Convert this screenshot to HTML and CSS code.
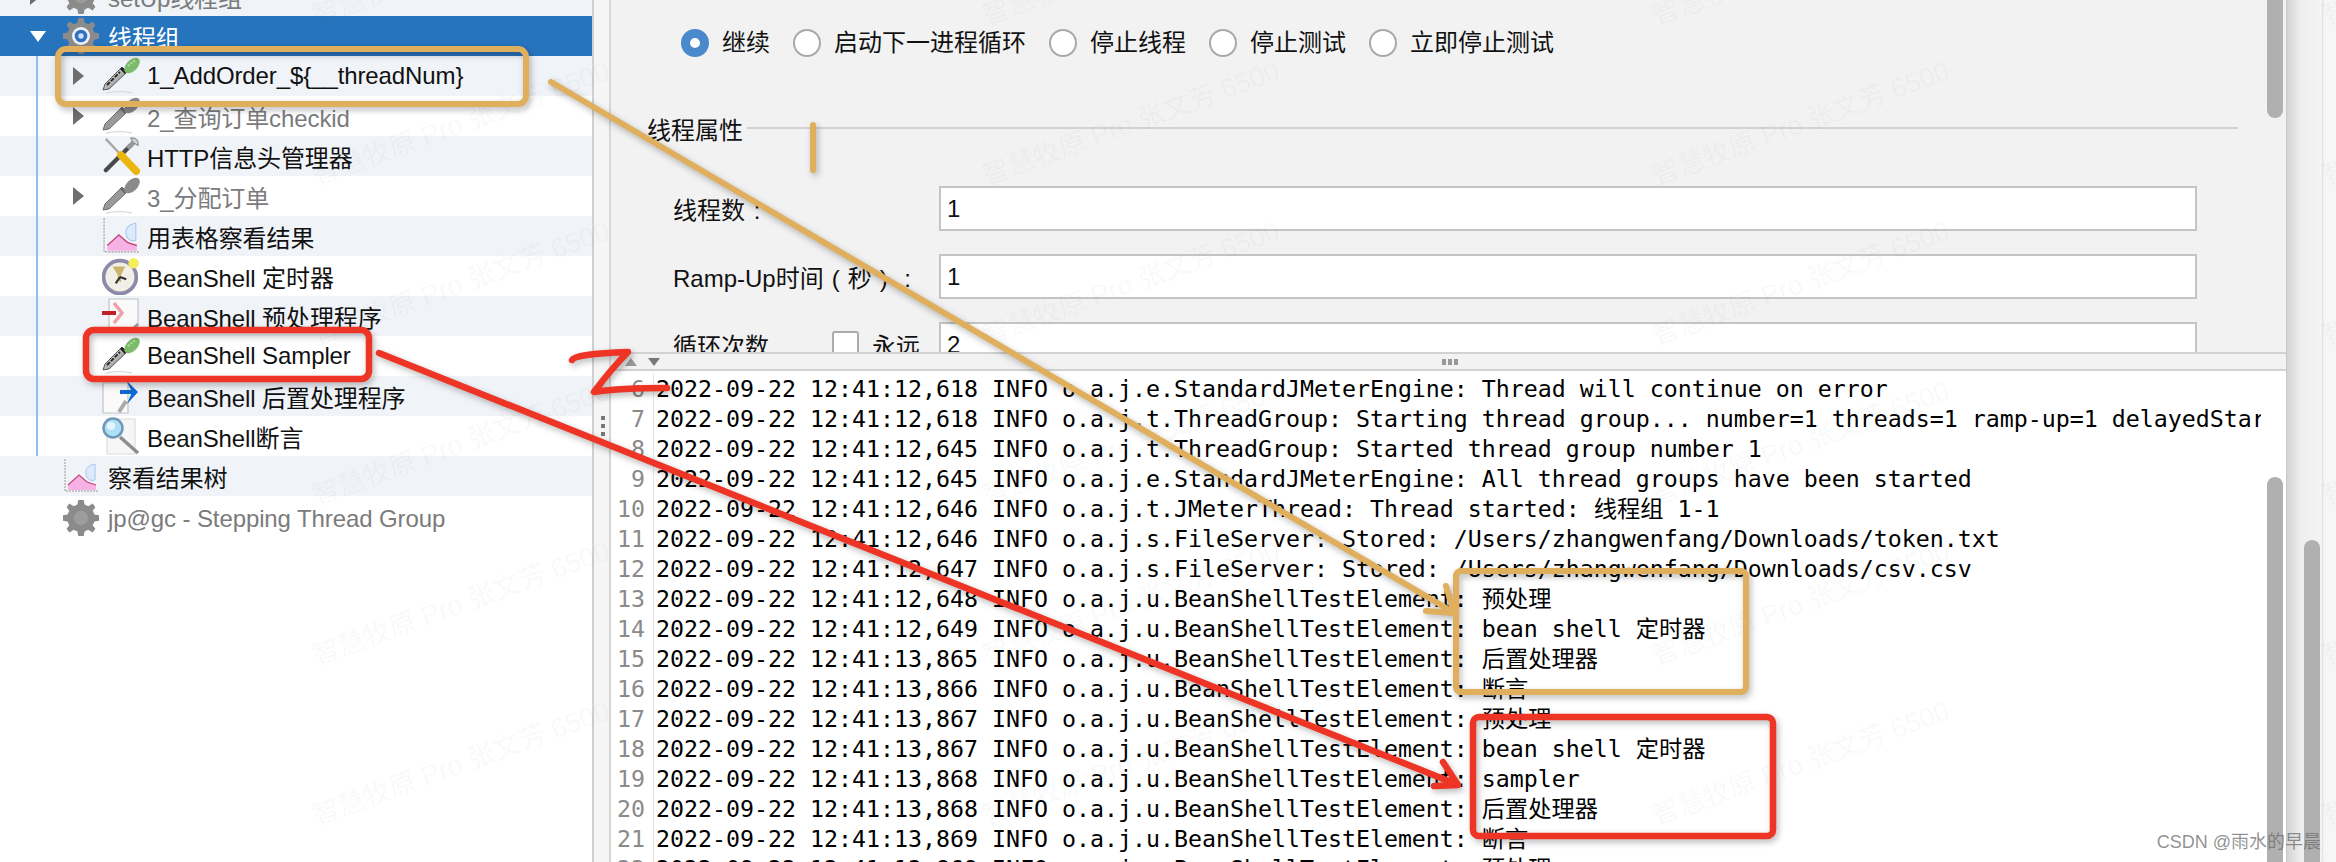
FILE: index.html
```html
<!DOCTYPE html>
<html lang="zh">
<head>
<meta charset="utf-8">
<title>JMeter</title>
<link rel="stylesheet" href="styles.css">
</head>
<body>
<svg class="defs" width="0" height="0" aria-hidden="true">
  <defs>
    <linearGradient id="glass" x1="0" y1="0" x2="1" y2="1"><stop offset="0" stop-color="#f2f2f2"/><stop offset="1" stop-color="#777"/></linearGradient>
    <g id="dropper-body">
      <path d="M1 33 L3 27 L20 10 L25 15 L7 32 Z" fill="url(#glass)" stroke="#5a5a5a" stroke-width="1"/>
      <path d="M5 28 L18 15" stroke="#222" stroke-width="1.800" stroke-dasharray="4 1.500"/>
      <path d="M19 11 L24 16" stroke="#222" stroke-width="3"/>
      <path d="M4 36 Q18 33 30 36" stroke="#ddd" stroke-width="1.400" fill="none"/>
    </g>
    <symbol id="i-dropper" viewBox="0 0 38 38">
      <use href="#dropper-body"/>
      <ellipse cx="30" cy="8.500" rx="9.500" ry="5.500" transform="rotate(-45 30 8.500)" fill="#7cbb6c"/>
      <path d="M26 9 L33 3.500" stroke="#b2dea6" stroke-width="2" stroke-dasharray="2 1.500"/>
    </symbol>
    <symbol id="i-dropper-off" viewBox="0 0 38 38">
      <path d="M1 33 L3 27 L20 10 L25 15 L7 32 Z" fill="#9a9a9a" stroke="#6d6d6d" stroke-width="1"/>
      <path d="M19 11 L24 16" stroke="#6a6a6a" stroke-width="3"/>
      <path d="M4 36 Q18 33 30 36" stroke="#ddd" stroke-width="1.400" fill="none"/>
      <ellipse cx="30" cy="8.500" rx="9.500" ry="5.500" transform="rotate(-45 30 8.500)" fill="#8a8a8a"/>
    </symbol>
    <symbol id="i-tools" viewBox="0 0 38 40">
      <path d="M3 2 L20 20" stroke="#a8a8a8" stroke-width="2.500"/>
      <path d="M29 9 L3 35" stroke="#4a4a4a" stroke-width="4.500" stroke-linecap="round"/>
      <path d="M19 19 L35 36" stroke="#eab60f" stroke-width="8" stroke-linecap="round"/>
      <path d="M26 12 L33 5" stroke="#9a9a9a" stroke-width="5"/>
      <path d="M29 1 Q38 0 37 9 L32 6 Z" fill="#d2d2d2" stroke="#777"/>
    </symbol>
    <symbol id="i-chart" viewBox="0 0 36 36">
      <path d="M2 1 V33 H35" fill="none" stroke="#b8b8b8" stroke-width="1.500" stroke-dasharray="2 1"/>
      <path d="M5 32 V27 L16 17 L24 24 L33 27 V32 Z" fill="#f6b2e4"/>
      <path d="M5 27 L16 17 L24 24 L33 27" fill="none" stroke="#c64a78" stroke-width="1.300"/>
      <path d="M32 6 Q21 8 23 17 Q25 24 32 22 Z" fill="#dceafb" stroke="#a6c8f0"/>
    </symbol>
    <symbol id="i-timer" viewBox="0 0 36 36">
      <circle cx="17" cy="19" r="15.500" fill="#f1efe6" stroke="#8d89a8" stroke-width="3.500"/>
      <path d="M10 9 H22 L18 17 V24 L15 22 V17 Z" fill="#c9b46c"/>
      <path d="M17 19 L13 25 M17 19 L23 21" stroke="#333" stroke-width="2"/>
      <circle cx="30" cy="6" r="5" fill="#f4ee5a"/>
    </symbol>
    <symbol id="i-pre" viewBox="0 0 38 36">
      <path d="M7 1 H36 V26 L29 33 H7 Z" fill="#fafafa" stroke="#c4c4c4" stroke-width="1.200"/>
      <path d="M29 33 L36 26" stroke="#999" stroke-width="3"/>
      <path d="M0 15 H14" stroke="#c01f2a" stroke-width="4"/>
      <path d="M12 5 L20 15 L12 25" fill="none" stroke="#f0a0a8" stroke-width="3.500"/>
    </symbol>
    <symbol id="i-post" viewBox="0 0 38 38">
      <path d="M1 6 H26 V36 H1 Z" fill="#fafafa" stroke="#c4c4c4" stroke-width="1.200"/>
      <path d="M17 35 L24 24" stroke="#aaa" stroke-width="4"/>
      <path d="M18 15 H32" stroke="#0e6ad0" stroke-width="4"/>
      <path d="M24 3 L36 15 L25 27 L30 15 Z" fill="#0e6ad0"/>
    </symbol>
    <symbol id="i-assert" viewBox="0 0 38 38">
      <path d="M5 2 H33 V37 H5 Z" fill="#f6f6f6" stroke="#dcdcdc" stroke-width="1.200"/>
      <path d="M18 20 L36 36" stroke="#8d8d8d" stroke-width="3.500"/>
      <circle cx="11" cy="11" r="9.500" fill="#aee0f6" stroke="#6d98b8" stroke-width="2.500"/>
      <circle cx="9" cy="9" r="4" fill="#e4f6fd"/>
    </symbol>
    <g id="gear-shape">
      <path d="M15 0 H21 L22 5 L26 7 L31 4 L34 8 L31 12 L33 16 L38 17 V23 L33 24 L31 28 L34 32 L31 36 L26 33 L22 35 L21 40 H15 L14 35 L10 33 L5 36 L2 32 L5 28 L3 24 L-2 23 V17 L3 16 L5 12 L2 8 L5 4 L10 7 L14 5 Z" fill="#8b8b8b"/>
    </g>
    <symbol id="i-gear" viewBox="-2 0 40 40">
      <use href="#gear-shape"/>
      <circle cx="18" cy="20" r="10" fill="#eef2f8"/>
      <circle cx="18" cy="20" r="7" fill="#2f6fc4"/>
      <circle cx="18" cy="20" r="3" fill="#cfe0f6"/>
    </symbol>
    <symbol id="i-gear-off" viewBox="-2 0 40 40">
      <use href="#gear-shape"/>
      <circle cx="18" cy="20" r="8" fill="#9c9c9c"/>
    </symbol>
  </defs>
</svg>

<div class="app">
  <nav class="tree">
    <div class="tree-inner">
      <div class="row lvl1 alt off"><span class="caret right"></span><svg class="ic ic1"><use href="#i-gear-off"/></svg><span class="name">setUp线程组</span></div>
      <div class="row lvl1 selected"><span class="caret down"></span><svg class="ic ic1"><use href="#i-gear"/></svg><span class="name">线程组</span></div>
      <div class="children">
        <div class="row lvl2 alt"><span class="caret right"></span><svg class="ic"><use href="#i-dropper"/></svg><span class="name">1_AddOrder_${__threadNum}</span></div>
        <div class="row lvl2 off"><span class="caret right"></span><svg class="ic"><use href="#i-dropper-off"/></svg><span class="name">2_查询订单checkid</span></div>
        <div class="row lvl2 alt"><span class="caret"></span><svg class="ic"><use href="#i-tools"/></svg><span class="name">HTTP信息头管理器</span></div>
        <div class="row lvl2 off"><span class="caret right"></span><svg class="ic"><use href="#i-dropper-off"/></svg><span class="name">3_分配订单</span></div>
        <div class="row lvl2 alt"><span class="caret"></span><svg class="ic"><use href="#i-chart"/></svg><span class="name">用表格察看结果</span></div>
        <div class="row lvl2"><span class="caret"></span><svg class="ic"><use href="#i-timer"/></svg><span class="name">BeanShell 定时器</span></div>
        <div class="row lvl2 alt"><span class="caret"></span><svg class="ic"><use href="#i-pre"/></svg><span class="name">BeanShell 预处理程序</span></div>
        <div class="row lvl2"><span class="caret"></span><svg class="ic"><use href="#i-dropper"/></svg><span class="name">BeanShell Sampler</span></div>
        <div class="row lvl2 alt"><span class="caret"></span><svg class="ic"><use href="#i-post"/></svg><span class="name">BeanShell 后置处理程序</span></div>
        <div class="row lvl2"><span class="caret"></span><svg class="ic"><use href="#i-assert"/></svg><span class="name">BeanShell断言</span></div>
      </div>
      <div class="row lvl1 alt"><span class="caret"></span><svg class="ic ic1"><use href="#i-chart"/></svg><span class="name">察看结果树</span></div>
      <div class="row lvl1 off last"><span class="caret"></span><svg class="ic ic1"><use href="#i-gear-off"/></svg><span class="name">jp@gc - Stepping Thread Group</span></div>
    </div>
  </nav>

  <div class="gutter"><span class="grip"></span></div>

  <main class="main">
    <section class="panel">
      <div class="radios">
        <label class="radio"><span class="dot on"></span>继续</label>
        <label class="radio"><span class="dot"></span>启动下一进程循环</label>
        <label class="radio"><span class="dot"></span>停止线程</label>
        <label class="radio"><span class="dot"></span>停止测试</label>
        <label class="radio"><span class="dot"></span>立即停止测试</label>
      </div>
      <div class="legend"><span>线程属性</span><i class="rule"></i></div>
      <div class="form">
        <div class="field"><div class="lab">线程数<span class="cell">:</span></div><div class="input">1</div></div>
        <div class="field"><div class="lab">Ramp-Up时间<span class="cell">(</span>秒<span class="cell">)</span><span class="cell">:</span></div><div class="input">1</div></div>
        <div class="field"><div class="lab loop"><span>循环次数</span><span class="check"></span><span>永远</span></div><div class="input">2</div></div>
      </div>
      <div class="thumb thumb-top"></div>
    </section>

    <div class="splitter">
      <span class="tri up"></span><span class="tri dn"></span>
      <span class="dots"></span>
    </div>

    <section class="log">
      <div class="ln"><span class="num">6</span><span class="txt">2022-09-22 12:41:12,618 INFO o.a.j.e.StandardJMeterEngine: Thread will continue on error</span></div>
      <div class="ln"><span class="num">7</span><span class="txt">2022-09-22 12:41:12,618 INFO o.a.j.t.ThreadGroup: Starting thread group... number=1 threads=1 ramp-up=1 delayedStart=false</span></div>
      <div class="ln"><span class="num">8</span><span class="txt">2022-09-22 12:41:12,645 INFO o.a.j.t.ThreadGroup: Started thread group number 1</span></div>
      <div class="ln"><span class="num">9</span><span class="txt">2022-09-22 12:41:12,645 INFO o.a.j.e.StandardJMeterEngine: All thread groups have been started</span></div>
      <div class="ln"><span class="num">10</span><span class="txt">2022-09-22 12:41:12,646 INFO o.a.j.t.JMeterThread: Thread started: 线程组 1-1</span></div>
      <div class="ln"><span class="num">11</span><span class="txt">2022-09-22 12:41:12,646 INFO o.a.j.s.FileServer: Stored: /Users/zhangwenfang/Downloads/token.txt</span></div>
      <div class="ln"><span class="num">12</span><span class="txt">2022-09-22 12:41:12,647 INFO o.a.j.s.FileServer: Stored: /Users/zhangwenfang/Downloads/csv.csv</span></div>
      <div class="ln"><span class="num">13</span><span class="txt">2022-09-22 12:41:12,648 INFO o.a.j.u.BeanShellTestElement: 预处理</span></div>
      <div class="ln"><span class="num">14</span><span class="txt">2022-09-22 12:41:12,649 INFO o.a.j.u.BeanShellTestElement: bean shell 定时器</span></div>
      <div class="ln"><span class="num">15</span><span class="txt">2022-09-22 12:41:13,865 INFO o.a.j.u.BeanShellTestElement: 后置处理器</span></div>
      <div class="ln"><span class="num">16</span><span class="txt">2022-09-22 12:41:13,866 INFO o.a.j.u.BeanShellTestElement: 断言</span></div>
      <div class="ln"><span class="num">17</span><span class="txt">2022-09-22 12:41:13,867 INFO o.a.j.u.BeanShellTestElement: 预处理</span></div>
      <div class="ln"><span class="num">18</span><span class="txt">2022-09-22 12:41:13,867 INFO o.a.j.u.BeanShellTestElement: bean shell 定时器</span></div>
      <div class="ln"><span class="num">19</span><span class="txt">2022-09-22 12:41:13,868 INFO o.a.j.u.BeanShellTestElement: sampler</span></div>
      <div class="ln"><span class="num">20</span><span class="txt">2022-09-22 12:41:13,868 INFO o.a.j.u.BeanShellTestElement: 后置处理器</span></div>
      <div class="ln"><span class="num">21</span><span class="txt">2022-09-22 12:41:13,869 INFO o.a.j.u.BeanShellTestElement: 断言</span></div>
      <div class="ln"><span class="num">22</span><span class="txt">2022-09-22 12:41:13,869 INFO o.a.j.u.BeanShellTestElement: 预处理</span></div>
      <div class="thumb thumb-log"></div>
    </section>
  </main>

  <aside class="outer"><div class="outer-thumb"></div></aside>
</div>

<div class="marks" aria-hidden="true">
  <span>智慧牧原 Pro 张文芳 6500</span><span>智慧牧原 Pro 张文芳 6500</span><span>智慧牧原 Pro 张文芳 6500</span><span>智慧牧原 Pro 张文芳 6500</span><span>智慧牧原 Pro 张文芳 6500</span>
  <span>智慧牧原 Pro 张文芳 6500</span><span>智慧牧原 Pro 张文芳 6500</span><span>智慧牧原 Pro 张文芳 6500</span><span>智慧牧原 Pro 张文芳 6500</span><span>智慧牧原 Pro 张文芳 6500</span>
  <span>智慧牧原 Pro 张文芳 6500</span><span>智慧牧原 Pro 张文芳 6500</span><span>智慧牧原 Pro 张文芳 6500</span><span>智慧牧原 Pro 张文芳 6500</span><span>智慧牧原 Pro 张文芳 6500</span>
  <span>智慧牧原 Pro 张文芳 6500</span><span>智慧牧原 Pro 张文芳 6500</span><span>智慧牧原 Pro 张文芳 6500</span><span>智慧牧原 Pro 张文芳 6500</span><span>智慧牧原 Pro 张文芳 6500</span>
  <span>智慧牧原 Pro 张文芳 6500</span><span>智慧牧原 Pro 张文芳 6500</span><span>智慧牧原 Pro 张文芳 6500</span><span>智慧牧原 Pro 张文芳 6500</span><span>智慧牧原 Pro 张文芳 6500</span>
  <span>智慧牧原 Pro 张文芳 6500</span><span>智慧牧原 Pro 张文芳 6500</span><span>智慧牧原 Pro 张文芳 6500</span><span>智慧牧原 Pro 张文芳 6500</span><span>智慧牧原 Pro 张文芳 6500</span>
</div>

<svg class="notes" viewBox="0 0 2336 862" aria-hidden="true">
  <g class="orange">
    <rect x="58" y="49" width="468" height="55" rx="8"/>
    <rect x="1456" y="571" width="290" height="121" rx="5"/>
    <path d="M551 82 L1453 612"/>
    <path d="M1426 611 L1454 613 L1446 586"/>
    <path d="M813 125 V170"/>
  </g>
  <g class="red">
    <rect x="86" y="330" width="283" height="49" rx="8"/>
    <rect x="1473" y="717" width="300" height="119" rx="6"/>
    <path d="M379 353 L1456 784"/>
    <path d="M1434 786 L1458 785 L1443 762"/>
    <path d="M572 360 Q574 354 628 352 Q612 368 594 392 Q620 388 667 388"/>
  </g>
</svg>

<div class="csdn">CSDN @雨水的早晨</div>
</body>
</html>
```
FILE: styles.css
```css
* { box-sizing: border-box; }
html, body { margin: 0; padding: 0; }
body {
  width: 2336px;
  height: 862px;
  overflow: hidden;
  position: relative;
  background: #fff;
  color: #111;
  font-family: "Liberation Sans", "Noto Sans CJK SC", sans-serif;
  font-size: 24px;
}
.defs { position: absolute; }
.app { display: flex; height: 862px; }

/* tree */
.tree { width: 592px; flex: none; overflow: hidden; background: #fff; }
.tree-inner { margin-top: -24px; }
.row { height: 40px; display: flex; align-items: center; white-space: nowrap; }
.name { letter-spacing: -.1px; }
.last { margin-top: 2px; }
.last .name { padding-top: 2px; }
.alt { background: #f0f3f8; }
.off { color: #7b7b7b; }
.selected { background: #2673be; color: #fff; }
.lvl1 { padding-left: 30px; }
.lvl2 { padding-left: 73px; }
.caret { flex: none; display: block; width: 0; height: 0; }
.lvl1 .caret { margin-right: 33px; }
.lvl2 .caret { margin-right: 29px; }
.caret.right {
  border-left: 11px solid #6e6e6e;
  border-top: 9px solid transparent;
  border-bottom: 9px solid transparent;
  margin-right: 18px;
}
.lvl1 .caret.right { margin-right: 22px; }
.caret.down {
  border-top: 11px solid #fff;
  border-left: 8px solid transparent;
  border-right: 8px solid transparent;
  margin-right: 17px;
}
.ic { flex: none; width: 38px; height: 38px; margin-right: 7px; overflow: visible; filter: blur(.4px); }
.ic1 { width: 36px; height: 36px; margin-right: 9px; }
.children { position: relative; }
.children::before {
  content: "";
  position: absolute;
  left: 36px;
  top: 0;
  bottom: 0;
  width: 2px;
  background: #8cc0f2;
  z-index: 1;
}

/* splitter between tree and editor */
.gutter {
  width: 19px;
  flex: none;
  background: #f5f5f5;
  border-left: 2px solid #d0d0d0;
  border-right: 2px solid #d6d6d6;
  display: flex;
  padding: 416px 0 0 7px;
}
.grip { display: block; width: 4px; height: 20px; background: repeating-linear-gradient(#777 0 4px, transparent 4px 8px); }

/* editor */
.main { width: 1675px; flex: none; display: flex; flex-direction: column; position: relative; }
.panel {
  height: 352px;
  flex: none;
  overflow: hidden;
  background: #f2f2f2;
  position: relative;
  padding-top: 29px;
}
.radios { display: flex; gap: 23px; padding-left: 70px; }
.radio { display: flex; align-items: center; gap: 13px; height: 28px; line-height: 28px; }
.dot { width: 28px; height: 28px; border-radius: 50%; background: #fff; border: 2px solid #a9a9a9; flex: none; }
.dot.on { background: #fff; border: 9px solid #4b89cd; }

.legend { display: flex; align-items: center; gap: 4px; width: 1591px; margin: 57px 0 0 36px; height: 28px; }
.rule { flex: 1; height: 2px; background: #d2d2d2; }

.form { display: flex; flex-direction: column; gap: 23px; width: 1524px; margin: 44px 0 0 62px; }
.field { display: flex; align-items: center; height: 45px; }
.lab { width: 266px; flex: none; white-space: nowrap; }
.cell { display: inline-block; width: 24px; text-align: center; }
.input { flex: 1; height: 45px; line-height: 41px; padding-left: 6px; background: #fff; border: 2px solid #c4c4c4; }
.loop { display: flex; align-items: center; }
.check { width: 27px; height: 27px; margin: 0 13px 0 63px; background: #fff; border: 2px solid #ababab; border-radius: 3px; flex: none; }

.thumb { position: absolute; width: 16px; background: #b0b0b0; }
.thumb-top { right: 3px; top: 0; height: 118px; border-radius: 0 0 8px 8px; }
.thumb-log { right: 3px; top: 106px; bottom: 0; border-radius: 8px 8px 0 0; }

.splitter {
  height: 19px;
  flex: none;
  background: #f2f2f2;
  border-top: 2px solid #d2d2d2;
  border-bottom: 2px solid #d2d2d2;
  display: flex;
  align-items: center;
  padding-left: 14px;
}
.tri { display: block; width: 0; height: 0; border-left: 6px solid transparent; border-right: 6px solid transparent; margin-right: 11px; }
.tri.up { border-bottom: 8px solid #9a9a9a; }
.tri.dn { border-top: 8px solid #777; }
.dots {
  display: block;
  width: 16px;
  height: 6px;
  margin-left: 771px;
  background: repeating-linear-gradient(90deg, #999 0 4px, transparent 4px 6px);
}

.log {
  flex: 1;
  min-height: 0;
  overflow: hidden;
  background: #fff;
  position: relative;
  padding-top: 3px;
  font-family: "DejaVu Sans Mono", "Noto Sans CJK SC", monospace;
  font-size: 23.25px;
}
.ln { display: flex; height: 30px; line-height: 30px; white-space: pre; }
.num { width: 43px; flex: none; padding-right: 8px; text-align: right; color: #8a8a8a; border-right: 1px solid #e4e4e4; }
.txt { width: 1607px; flex: none; padding-left: 2px; overflow: hidden; color: #000; }

/* far right window bar */
.outer {
  flex: 1;
  position: relative;
  background: linear-gradient(90deg, #d4d4d4 0, #efefef 14px, #f4f4f4 35px, #dedede 35px, #f6f6f6 37px);
  border-left: 1px solid #c8c8c8;
}
.outer-thumb {
  position: absolute;
  left: 17px;
  top: 540px;
  bottom: 0;
  width: 16px;
  background: #b0b0b0;
  border-radius: 8px 8px 0 0;
}

/* watermark overlay */
.marks {
  position: absolute;
  left: -350px;
  top: -125px;
  display: grid;
  grid-template-columns: repeat(5, 670px);
  grid-auto-rows: 160px;
  pointer-events: none;
}
.marks span {
  display: block;
  align-self: end;
  height: 38px;
  line-height: 38px;
  white-space: nowrap;
  font-size: 27px;
  color: rgba(60, 70, 80, .045);
  transform-origin: left bottom;
  transform: rotate(-20deg);
}

/* hand-drawn annotations */
.notes { position: absolute; left: 0; top: 0; width: 2336px; height: 862px; pointer-events: none; }
.notes g { fill: none; stroke-linecap: round; stroke-linejoin: round; filter: drop-shadow(2px 3px 3px rgba(0, 0, 0, .28)); }
.orange { stroke: #e0af5e; stroke-width: 6px; }
.red { stroke: #ee3424; stroke-width: 6.5px; }

.csdn {
  position: absolute;
  right: 15px;
  bottom: 7px;
  font-size: 18px;
  line-height: 26px;
  color: rgba(110, 110, 110, .75);
}
```
